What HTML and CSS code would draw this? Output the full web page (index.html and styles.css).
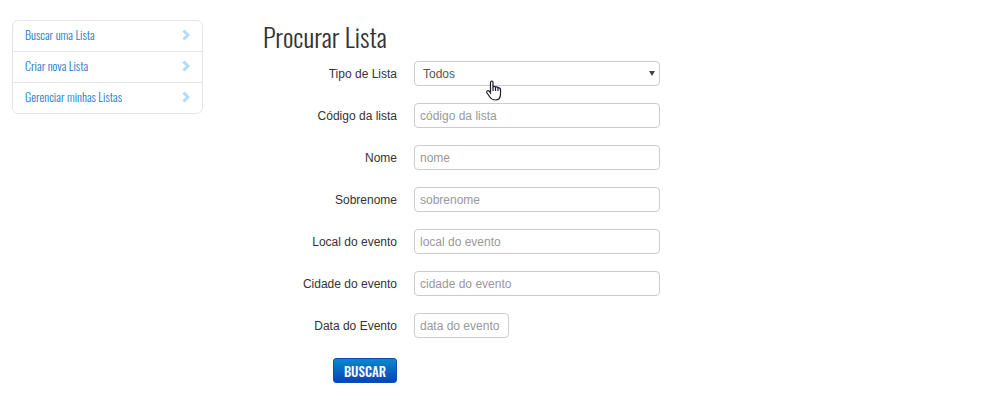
FILE: index.html
```html
<!DOCTYPE html>
<html lang="pt-BR">
<head>
<meta charset="utf-8">
<meta name="viewport" content="width=device-width, initial-scale=1">
<title>Procurar Lista</title>
<link rel="stylesheet" href="styles.css">
</head>
<body>
<div class="page">
  <nav class="menu" aria-label="Listas">
    <a class="menu-item" href="#buscar">Buscar uma Lista
      <svg class="chevron" viewBox="0 0 8 12" aria-hidden="true"><path d="M1.5 1.5 L6 6 L1.5 10.5"/></svg></a>
    <a class="menu-item" href="#criar">Criar nova Lista
      <svg class="chevron" viewBox="0 0 8 12" aria-hidden="true"><path d="M1.5 1.5 L6 6 L1.5 10.5"/></svg></a>
    <a class="menu-item" href="#gerenciar">Gerenciar minhas Listas
      <svg class="chevron" viewBox="0 0 8 12" aria-hidden="true"><path d="M1.5 1.5 L6 6 L1.5 10.5"/></svg></a>
  </nav>
  <main class="content">
    <h1 class="title">Procurar Lista</h1>
    <form class="form">
      <div class="row">
        <label class="label" for="tipo">Tipo de Lista</label>
        <div class="select-box">
          <select class="field select" id="tipo"><option>Todos</option></select>
          <svg class="arrow" viewBox="0 0 6 5" aria-hidden="true"><path d="M0 0 H6 L3 5 Z"/></svg>
          <svg class="pointer" viewBox="0 0 16 21" aria-hidden="true"><path d="M4.5 13 V2.5 C4.5 .5 7 .5 7 2.5 V7.5 C7 6 9.5 6 9.5 7.5 C9.5 6.5 12 6.5 12 8 C12 7.5 14.5 7.5 14.5 9.5 V14 C14.5 18 12.5 20 9.5 20 C6 20 4.5 18 3.5 16.5 L1 13 C0 11 2 10 3 11 Z M7 7.5 V11 M9.5 7.5 V11 M12 8 V11"/></svg>
        </div>
      </div>
      <div class="row">
        <label class="label" for="codigo">Código da lista</label>
        <input class="field" id="codigo" type="text" placeholder="código da lista">
      </div>
      <div class="row">
        <label class="label" for="nome">Nome</label>
        <input class="field" id="nome" type="text" placeholder="nome">
      </div>
      <div class="row">
        <label class="label" for="sobrenome">Sobrenome</label>
        <input class="field" id="sobrenome" type="text" placeholder="sobrenome">
      </div>
      <div class="row">
        <label class="label" for="local">Local do evento</label>
        <input class="field" id="local" type="text" placeholder="local do evento">
      </div>
      <div class="row">
        <label class="label" for="cidade">Cidade do evento</label>
        <input class="field" id="cidade" type="text" placeholder="cidade do evento">
      </div>
      <div class="row">
        <label class="label" for="data">Data do Evento</label>
        <input class="field field-date" id="data" type="text" placeholder="data do evento">
      </div>
      <div class="actions"><button class="submit" type="submit">BUSCAR</button></div>
    </form>
  </main>
</div>
</body>
</html>
```
FILE: styles.css
```css
* { box-sizing: border-box; }
body {
  margin: 0;
  background: #fff;
  color: #333;
  font: 12px/16px "Liberation Sans", Arial, sans-serif;
}
.page {
  display: flex;
  align-items: flex-start;
  gap: 60px;
  padding: 20px 12px;
}
.menu {
  flex: 0 1 191px;
  border: 1px solid #e5e5e5;
  border-radius: 6px;
}
.menu-item {
  display: flex;
  align-items: center;
  justify-content: space-between;
  padding: 5px 12px 7px;
  color: #1f7ac6;
  font: 300 12px/18px Oswald, "Liberation Sans Narrow", "Liberation Sans", sans-serif;
  text-decoration: none;
}
.menu-item + .menu-item { border-top: 1px solid #e5e5e5; }
.chevron {
  width: 8px;
  height: 12px;
  fill: none;
  stroke: #b5daf4;
  stroke-width: 3;
}
.content { flex: 0 1 397px; }
.title {
  margin: 0 0 7px;
  font: 300 26px/34px Oswald, "Liberation Sans Narrow", "Liberation Sans", sans-serif;
}
.form {
  display: flex;
  flex-direction: column;
  gap: 17px;
}
.row {
  display: flex;
  align-items: center;
  gap: 17px;
}
.label {
  flex: 0 0 134px;
  text-align: right;
}
.field {
  flex: 1;
  min-width: 0;
  height: 25px;
  padding: 0 5px;
  border: 1px solid #ccc;
  border-radius: 4px;
  background: #fff;
  color: #555;
  font: inherit;
}
.field::placeholder { color: #999; opacity: 1; }
.field-date { flex: 0 0 95px; }
.select-box {
  position: relative;
  display: flex;
  flex: 1;
}
.select {
  appearance: none;
  padding: 0 20px 0 8px;
}
.arrow {
  position: absolute;
  top: 10px;
  right: 5px;
  width: 6px;
  height: 5px;
  fill: #444;
  pointer-events: none;
}
.pointer {
  position: absolute;
  top: 19px;
  left: 72px;
  width: 16px;
  height: 21px;
  fill: #fff;
  stroke: #1c1c2c;
  stroke-width: 1.2;
  pointer-events: none;
}
.actions {
  display: flex;
  justify-content: flex-end;
  width: 134px;
  padding-top: 3px;
}
.submit {
  height: 25px;
  padding: 0 10px;
  border: 1px solid #0a4fb4;
  border-radius: 3px;
  background: linear-gradient(#0a88cc, #0644bc);
  color: #fff;
  font: 500 13px/16px Oswald, "Liberation Sans Narrow", "Liberation Sans", sans-serif;
}
```
